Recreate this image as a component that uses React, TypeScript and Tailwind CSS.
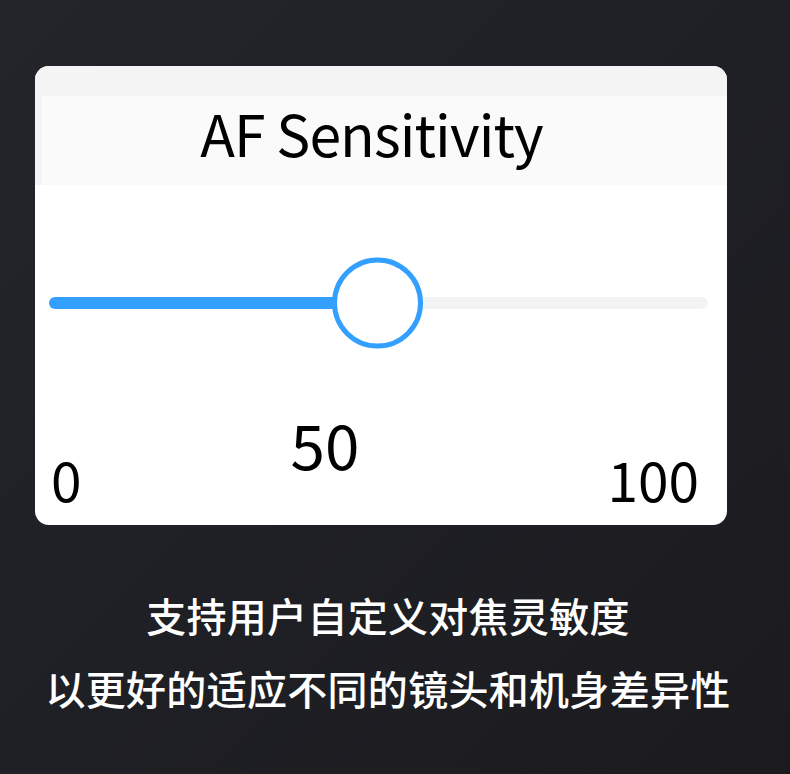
const font = { fontFamily: '"Noto Sans CJK SC", "Noto Sans", sans-serif' };

function Slider({ fill }: { fill: number }) {
  return (
    <div className="relative ml-[14px] mr-[19px] h-[12px] rounded-full bg-[#f3f3f3]">
      <div className="h-full rounded-full bg-[#33a0ff]" style={{ width: fill }} />
      <div className="absolute left-[283px] top-1/2 h-[91px] w-[91px] -translate-y-1/2 rounded-full border-[5px] border-[#33a0ff] bg-white" />
    </div>
  );
}

export default function App() {
  return (
    <div
      className="h-[774px] w-[790px] overflow-hidden bg-gradient-to-br from-[#23252b] to-[#1b1b1f] pt-[66px]"
      style={font}
    >
      <div className="ml-[35px] w-[692px] overflow-hidden rounded-[14px] bg-white">
        <div className="bg-[#f4f4f4] pt-[30px]">
          <div className="ml-[7px] flex h-[89px] items-center justify-center bg-[#fafafa]">
            <h1 className="-ml-[26px] -mt-[16px] text-[57px] leading-none font-normal tracking-[-0.9px] text-black">
              AF Sensitivity
            </h1>
          </div>
        </div>
        <div className="pt-[112px]">
          <Slider fill={300} />
        </div>
        <div className="flex h-[216px] items-start px-[16px]">
          <span className="mt-[142px] text-[55px] leading-none text-black">0</span>
          <span className="mt-[103px] ml-[209px] text-[62px] leading-none text-black">50</span>
          <span className="ml-auto mr-[12px] mt-[142px] text-[55px] leading-none text-black">100</span>
        </div>
      </div>
      <div className="mt-[54px] flex flex-col items-center pr-[14px] text-[40px] leading-[73px] font-medium text-white">
        <p className="tracking-[0.3px]">支持用户自定义对焦灵敏度</p>
        <p className="tracking-[0.3px]">以更好的适应不同的镜头和机身差异性</p>
      </div>
    </div>
  );
}
